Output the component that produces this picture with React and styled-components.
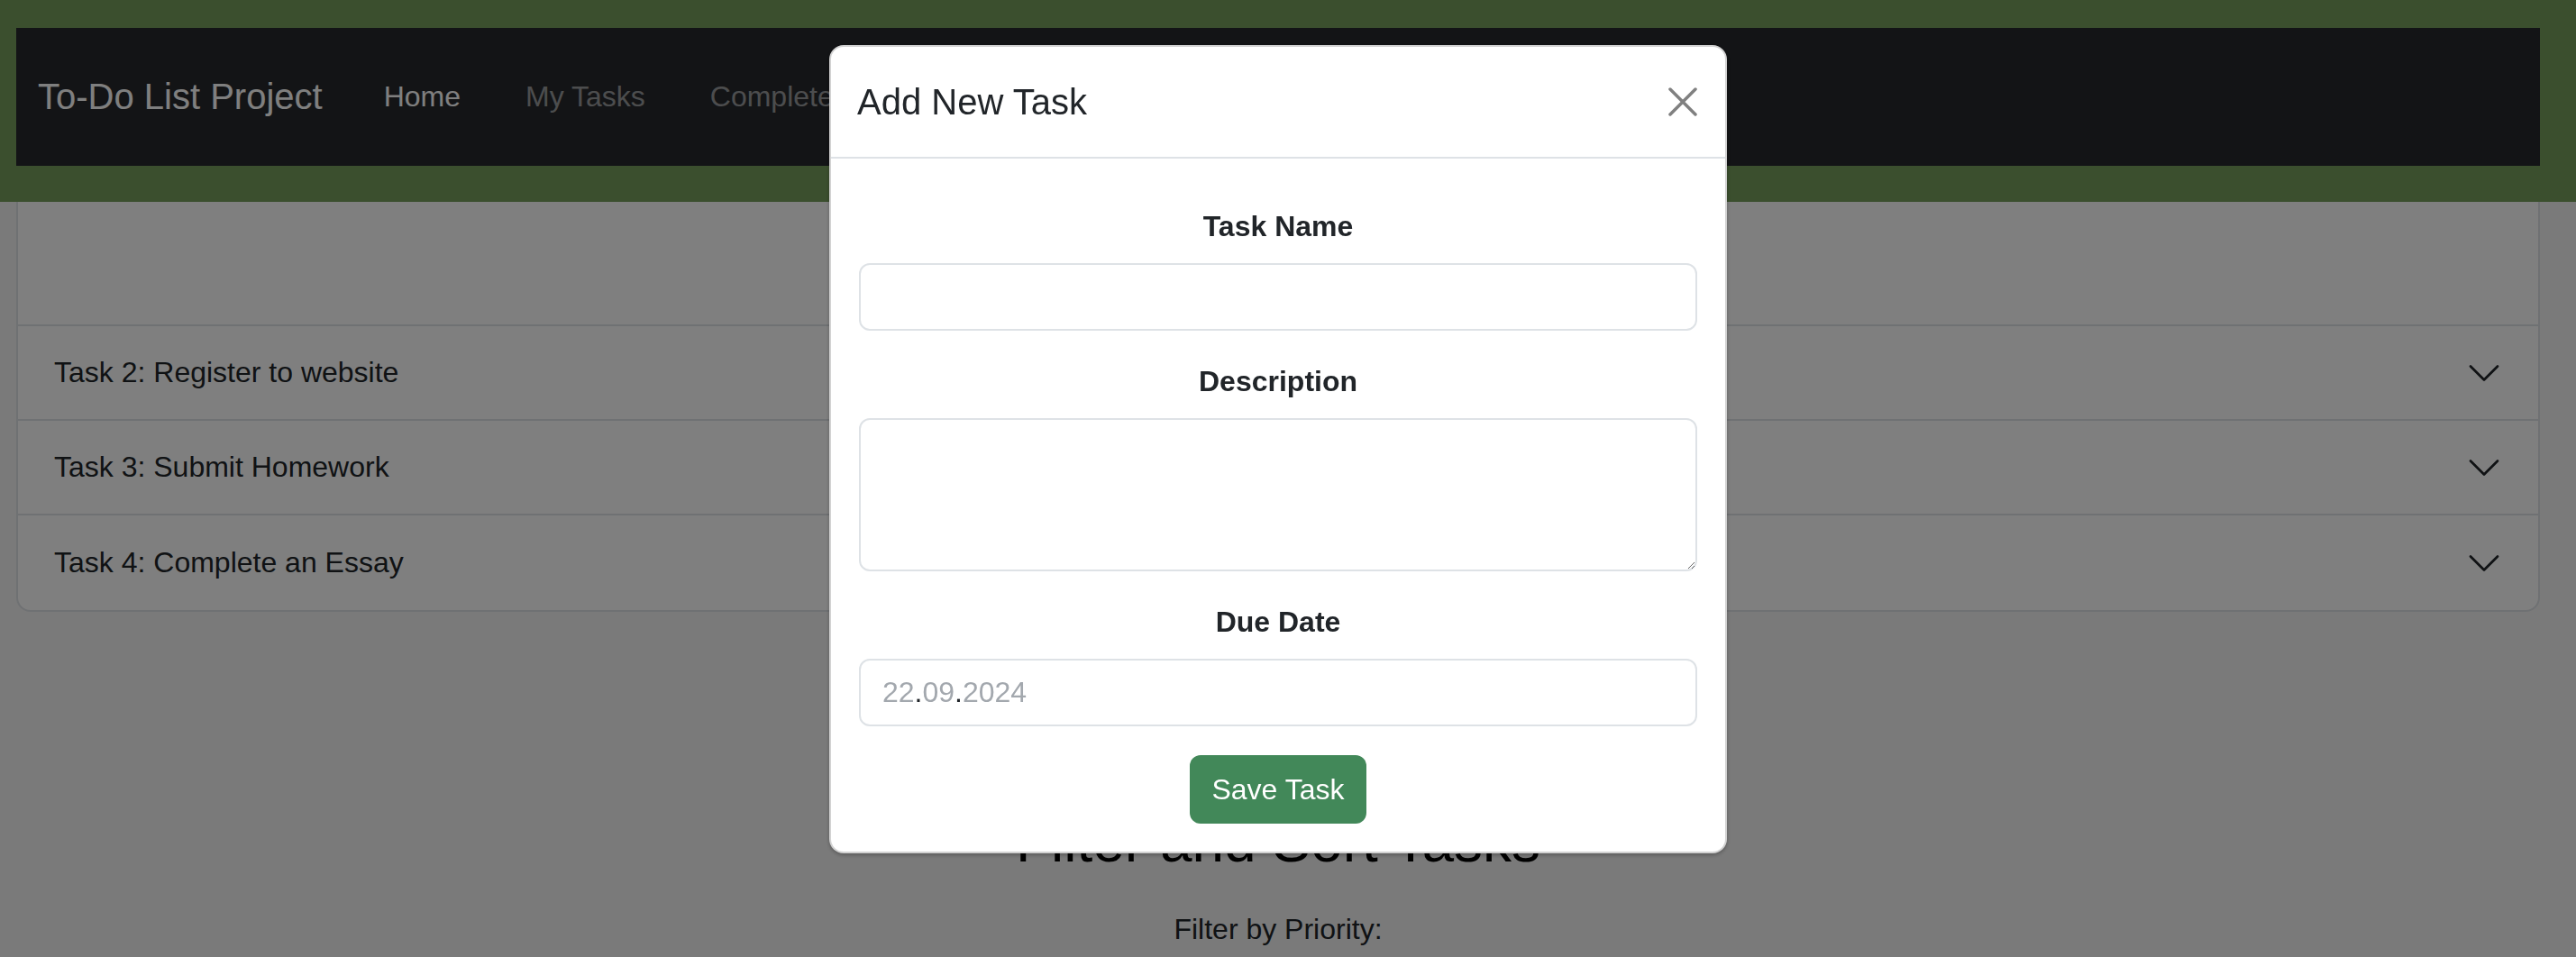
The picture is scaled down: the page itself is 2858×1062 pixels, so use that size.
import React, { useState } from "react";
import styled, { createGlobalStyle } from "styled-components";

const GlobalStyle = createGlobalStyle`
  body {
    margin: 0;
    background: #f4f4f4;
    font-family: "Liberation Sans", Arial, Helvetica, sans-serif;
    color: #212529;
  }
  * {
    box-sizing: border-box;
  }
`;

const HeaderBand = styled.header`
  background: #769e5c;
  padding: 31px 40px 40px 18px;
`;

const Navbar = styled.nav`
  height: 153px;
  background: #26282c;
  display: flex;
  align-items: center;
  padding: 0 24px;
`;

const Brand = styled.div`
  font-size: 40px;
  color: #ffffff;
  margin-right: 32px;
`;

const NavLink = styled.a`
  font-size: 32px;
  padding: 0 36px;
  color: ${(props) => (props.$active ? "#ffffff" : "rgba(255, 255, 255, 0.55)")};
  text-decoration: none;
`;

const Main = styled.main`
  padding: 0 40px 0 18px;
`;

const Accordion = styled.div`
  background: #ffffff;
  border: 2px solid #dee2e6;
  border-top: none;
  border-radius: 0 0 16px 16px;
`;

const AccordionItem = styled.div`
  height: ${(props) => props.$height}px;
  border-bottom: ${(props) => (props.$last ? "none" : "2px solid #dee2e6")};
  display: flex;
  align-items: center;
  justify-content: space-between;
  padding: 0 40px;
  font-size: 32px;
  color: #212529;
`;

const Chevron = () => (
  <svg width="40" height="40" viewBox="0 0 16 16" fill="none">
    <path
      d="M2 5L8 11L14 5"
      stroke="#212529"
      strokeWidth="1.1"
      strokeLinecap="round"
      strokeLinejoin="round"
    />
  </svg>
);

const FilterSection = styled.section`
  margin-top: 217px;
  text-align: center;
`;

const SectionTitle = styled.h2`
  font-size: 64px;
  font-weight: 400;
  line-height: 1.2;
  margin: 0 0 34px;
  color: #000000;
`;

const FilterLabel = styled.div`
  font-size: 32px;
  line-height: 1.5;
  color: #212529;
`;

const Backdrop = styled.div`
  position: fixed;
  inset: 0;
  background: rgba(0, 0, 0, 0.5);
`;

const ModalWrap = styled.div`
  position: fixed;
  inset: 0;
  display: flex;
  justify-content: center;
  align-items: flex-start;
  padding: 50px 40px 0 18px;
`;

const ModalContent = styled.div`
  width: 996px;
  background: #ffffff;
  border: 2px solid rgba(0, 0, 0, 0.175);
  border-radius: 16px;
  box-shadow: 0 2px 4px rgba(0, 0, 0, 0.25);
`;

const ModalHeader = styled.div`
  display: flex;
  align-items: center;
  justify-content: space-between;
  padding: 31px 31px 31px 29px;
  border-bottom: 2px solid #dee2e6;
`;

const ModalTitle = styled.h5`
  margin: 0;
  font-size: 40px;
  font-weight: 400;
  line-height: 1.5;
  color: #212529;
`;

const CloseButton = styled.button`
  width: 32px;
  height: 32px;
  padding: 0;
  border: none;
  background: transparent;
  display: flex;
  align-items: center;
  justify-content: center;
`;

const ModalBody = styled.form`
  padding: 51px 31px 31px;
  display: flex;
  flex-direction: column;
`;

const FormGroup = styled.div`
  display: flex;
  flex-direction: column;
  margin-bottom: 32px;
`;

const Label = styled.label`
  font-size: 32px;
  font-weight: 700;
  line-height: 1.5;
  text-align: center;
  margin-bottom: 17px;
  color: #212529;
`;

const TextInput = styled.input`
  width: 100%;
  height: 75px;
  padding: 12px 24px;
  font-size: 32px;
  font-family: inherit;
  border: 2px solid #dee2e6;
  border-radius: 12px;
  outline: none;
`;

const TextArea = styled.textarea`
  width: 100%;
  height: 170px;
  padding: 12px 24px;
  font-size: 32px;
  font-family: inherit;
  border: 2px solid #dee2e6;
  border-radius: 12px;
  resize: vertical;
  outline: none;
`;

const DateField = styled.div`
  height: 75px;
  display: flex;
  align-items: center;
  padding: 0 24px;
  font-size: 32px;
  border: 2px solid #dee2e6;
  border-radius: 12px;
`;

const DatePart = styled.span`
  color: ${(props) => (props.$sep ? "#212529" : "#a3a8ae")};
`;

const SaveButton = styled.button`
  align-self: center;
  height: 76px;
  padding: 0 24px;
  font-size: 32px;
  font-family: inherit;
  color: #ffffff;
  background: #428859;
  border: none;
  border-radius: 12px;
`;

const tasks = [
  "Task 2: Register to website",
  "Task 3: Submit Homework",
  "Task 4: Complete an Essay",
];

export default function App() {
  const [name, setName] = useState("");
  const [description, setDescription] = useState("");

  return (
    <>
      <GlobalStyle />
      <HeaderBand>
        <Navbar>
          <Brand>To-Do List Project</Brand>
          <NavLink $active>Home</NavLink>
          <NavLink>My Tasks</NavLink>
          <NavLink>Completed Tasks</NavLink>
        </Navbar>
      </HeaderBand>

      <Main>
        <Accordion>
          <AccordionItem $height={138} />
          {tasks.map((task, i) => (
            <AccordionItem key={task} $height={105} $last={i === tasks.length - 1}>
              <span>{task}</span>
              <Chevron />
            </AccordionItem>
          ))}
        </Accordion>

        <FilterSection>
          <SectionTitle>Filter and Sort Tasks</SectionTitle>
          <FilterLabel>Filter by Priority:</FilterLabel>
        </FilterSection>
      </Main>

      <Backdrop />
      <ModalWrap>
        <ModalContent>
          <ModalHeader>
            <ModalTitle>Add New Task</ModalTitle>
            <CloseButton type="button" aria-label="Close">
              <svg width="32" height="32" viewBox="0 0 32 32">
                <path
                  d="M2 2L30 30M30 2L2 30"
                  stroke="#808080"
                  strokeWidth="3.5"
                  strokeLinecap="round"
                />
              </svg>
            </CloseButton>
          </ModalHeader>
          <ModalBody onSubmit={(e) => e.preventDefault()}>
            <FormGroup>
              <Label>Task Name</Label>
              <TextInput value={name} onChange={(e) => setName(e.target.value)} />
            </FormGroup>
            <FormGroup>
              <Label>Description</Label>
              <TextArea
                value={description}
                onChange={(e) => setDescription(e.target.value)}
              />
            </FormGroup>
            <FormGroup>
              <Label>Due Date</Label>
              <DateField>
                <DatePart>22</DatePart>
                <DatePart $sep>.</DatePart>
                <DatePart>09</DatePart>
                <DatePart $sep>.</DatePart>
                <DatePart>2024</DatePart>
              </DateField>
            </FormGroup>
            <SaveButton type="submit">Save Task</SaveButton>
          </ModalBody>
        </ModalContent>
      </ModalWrap>
    </>
  );
}
